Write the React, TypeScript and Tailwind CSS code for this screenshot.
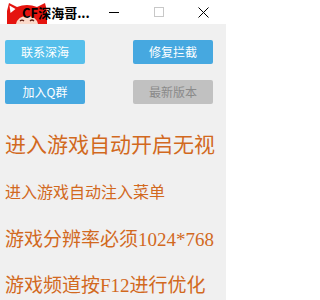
import React from "react";

function Fox() {
  return (
    <svg width="40" height="22" viewBox="0 0 40 22" className="absolute left-[7px] top-[2px]">
      <path d="M0 22 L0 9 L2 1 L10 5 Q20 1 30 5 L38 1 L40 9 L40 22 Z" fill="#e5140f" />
      <path d="M2.5 3.5 L3.5 11 L8.5 7 Z" fill="#ffffff" />
      <path d="M9 22 Q11 14 20 14 Q29 14 31 22 Z" fill="#fbd9c9" />
      <path d="M13 19 Q15 17 17 19" stroke="#5a1a10" strokeWidth="1.2" fill="none" />
      <path d="M23 19 Q25 17 27 19" stroke="#5a1a10" strokeWidth="1.2" fill="none" />
    </svg>
  );
}

export default function App() {
  const cjk = { fontFamily: '"Noto Sans CJK SC", sans-serif' };
  const mixed = { fontFamily: '"Liberation Serif", "Noto Sans CJK SC", serif' };
  return (
    <div className="w-[226px] h-[300px] overflow-hidden bg-[#f0f0f0]" style={cjk}>
      <div className="relative h-[24px] bg-white flex items-center">
        <Fox />
        <span className="relative pl-[22px] text-[13px] font-bold text-black leading-none">CF深海哥...</span>
        <div className="ml-auto flex h-full">
          <div className="w-[45px] h-full flex items-center justify-center">
            <svg width="10" height="10" viewBox="0 0 10 10">
              <path d="M0 5.5 H10" stroke="#000" strokeWidth="1" />
            </svg>
          </div>
          <div className="w-[45px] h-full flex items-center justify-center">
            <svg width="10" height="10" viewBox="0 0 10 10">
              <rect x="0.5" y="0.5" width="9" height="9" stroke="#c8c8c8" strokeWidth="1" fill="none" />
            </svg>
          </div>
          <div className="w-[45px] h-full flex items-center justify-center">
            <svg width="11" height="11" viewBox="0 0 11 11">
              <path d="M0.5 0.5 L10.5 10.5 M10.5 0.5 L0.5 10.5" stroke="#000" strokeWidth="1" />
            </svg>
          </div>
        </div>
      </div>
      <div className="px-[5px] pt-[16px]">
        <div className="grid grid-cols-[80px_80px] justify-between gap-y-[16px] pr-[8px]">
          <div className="h-[24px] rounded-[2px] bg-[#56bfeb] text-white text-[12px] flex items-center justify-center">联系深海</div>
          <div className="h-[24px] rounded-[2px] bg-[#46a8e0] text-white text-[12px] flex items-center justify-center">修复拦截</div>
          <div className="h-[24px] rounded-[2px] bg-[#46a8e0] text-white text-[12px] flex items-center justify-center">加入Q群</div>
          <div className="h-[24px] rounded-[2px] bg-[#c1c1c1] text-[#8a8a8a] text-[12px] flex items-center justify-center">最新版本</div>
        </div>
        <div className="flex flex-col text-[#d2691e]">
          <div className="mt-[29px] text-[21px] leading-[21px] whitespace-nowrap">进入游戏自动开启无视</div>
          <div className="mt-[29px] text-[16px] leading-[16px] whitespace-nowrap">进入游戏自动注入菜单</div>
          <div className="mt-[31px] text-[19px] leading-[19px] whitespace-nowrap" style={mixed}>游戏分辨率必须1024*768</div>
          <div className="mt-[27px] text-[19px] leading-[19px] whitespace-nowrap" style={mixed}>游戏频道按F12进行优化</div>
        </div>
      </div>
    </div>
  );
}
